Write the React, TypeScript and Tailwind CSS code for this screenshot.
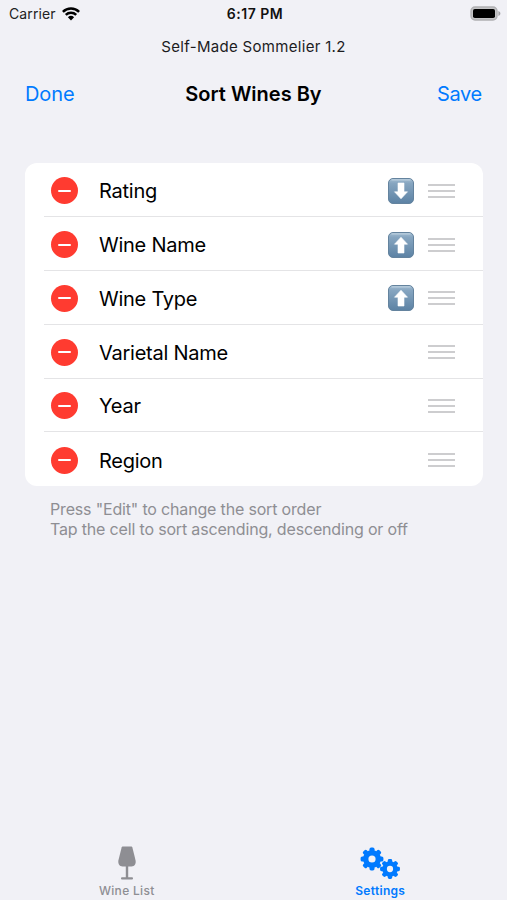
import React from 'react';

type SortDirection = 'asc' | 'desc' | null;

interface SortField {
  name: string;
  direction: SortDirection;
}

const fields: SortField[] = [
  { name: 'Rating', direction: 'desc' },
  { name: 'Wine Name', direction: 'asc' },
  { name: 'Wine Type', direction: 'asc' },
  { name: 'Varietal Name', direction: null },
  { name: 'Year', direction: null },
  { name: 'Region', direction: null },
];

const WifiIcon: React.FC = () => (
  <svg width="18" height="14" viewBox="0 0 18 14" fill="none" stroke="#000" strokeWidth="2.5">
    <path d="M0.9 4.9a11.6 11.6 0 0 1 16.2 0" />
    <path d="M3.8 7.9a7.4 7.4 0 0 1 10.4 0" />
    <path d="M9 13.6L5.9 10.3a4.5 4.5 0 0 1 6.2 0Z" fill="#000" stroke="none" />
  </svg>
);

const BatteryIcon: React.FC = () => (
  <svg width="31" height="15" viewBox="0 0 31 15">
    <rect x="1" y="1" width="26" height="13" rx="4" fill="#c4c4c6" stroke="#b0b0b3" strokeWidth="1.4" />
    <rect x="3" y="3" width="22" height="9" rx="1.8" fill="#000" />
    <path d="M28.4 4.9c1.2.5 2 1.4 2 2.5s-.8 2-2 2.5Z" fill="#a2a2a5" />
  </svg>
);

const ArrowBadge: React.FC<{ direction: 'asc' | 'desc' }> = ({ direction }) => (
  <svg width="26" height="26" viewBox="0 0 26 26">
    <defs>
      <linearGradient id={`badge-${direction}`} x1="0" y1="0" x2="0" y2="1">
        <stop offset="0" stopColor="#a3bdd2" />
        <stop offset="0.2" stopColor="#86a5c0" />
        <stop offset="1" stopColor="#5c82a4" />
      </linearGradient>
    </defs>
    <rect x="0.5" y="0.5" width="25" height="25" rx="4.5" fill={`url(#badge-${direction})`} stroke="#64839e" strokeWidth="1" />
    <path d="M4 1.9h18" stroke="#b9cddd" strokeWidth="1.2" strokeLinecap="round" />
    <path
      d="M13 5.2L19.5 12.2H16V21H10V12.2H6.5Z"
      fill="#fff"
      stroke="#fff"
      strokeWidth="0.6"
      strokeLinejoin="round"
      transform={direction === 'desc' ? 'rotate(180 13 13)' : undefined}
    />
  </svg>
);

const WineGlassIcon: React.FC = () => (
  <svg width="20" height="34" viewBox="0 0 20 34" fill="#8e8e93">
    <path d="M6 0.5H14C14.8 0.5 15.2 0.9 15.4 1.6L18.6 14.5C19.2 17.6 17.5 20.5 14.5 20.5H5.5C2.5 20.5 0.8 17.6 1.4 14.5L4.6 1.6C4.8 0.9 5.2 0.5 6 0.5Z" />
    <rect x="8.8" y="20" width="2.4" height="12" />
    <rect x="4" y="31.2" width="12" height="2.3" rx="1" />
  </svg>
);

const teeth = [0, 45, 90, 135, 180, 225, 270, 315];

const Gear: React.FC<{ cx: number; cy: number; scale: number }> = ({ cx, cy, scale }) => (
  <g transform={`translate(${cx} ${cy}) scale(${scale})`}>
    <circle r="6.3" fill="none" stroke="#007aff" strokeWidth="5.4" />
    {teeth.map((angle) => (
      <rect key={angle} x="-2.5" y="-11.4" width="5" height="4.5" rx="1.6" fill="#007aff" transform={`rotate(${angle})`} />
    ))}
  </g>
);

const GearsIcon: React.FC = () => (
  <svg width="40" height="34" viewBox="0 0 40 34">
    <Gear cx={12} cy={13} scale={1} />
    <Gear cx={30} cy={23} scale={0.87} />
  </svg>
);

const SortRow: React.FC<{ field: SortField; last: boolean }> = ({ field, last }) => (
  <li className="h-[53.8px] pl-[19px]">
    <div className={`flex h-full items-center pl-[7px] pr-7 pt-[2px] ${last ? '' : 'border-b border-[#e4e4e6]'}`}>
      <button className="flex size-[27px] shrink-0 items-center justify-center rounded-full bg-[#ff3b30]">
        <span className="h-[2px] w-[13px] rounded-full bg-white" />
      </button>
      <span className="ml-[21px] flex-1 pt-px text-[20px] tracking-[-0.25px] text-black">{field.name}</span>
      {field.direction && <ArrowBadge direction={field.direction} />}
      <div className="ml-[14px] flex w-[27px] flex-col gap-1">
        <span className="h-[2px] bg-[#cdcdcf]" />
        <span className="h-[2px] bg-[#cdcdcf]" />
        <span className="h-[2px] bg-[#cdcdcf]" />
      </div>
    </div>
  </li>
);

export default function App() {
  return (
    <div className="flex h-[900px] w-[507px] flex-col overflow-hidden bg-[#f1f1f6] font-['Inter','Liberation_Sans',sans-serif]">
      <header>
        <div className="grid h-[27px] grid-cols-3 items-center pl-[9px] pr-[6px]">
          <div className="flex items-center gap-[6px] text-[14px] tracking-[0.1px] text-[#222]">
            Carrier
            <WifiIcon />
          </div>
          <span className="text-center text-[14px] font-semibold tracking-[0.5px] text-[#111]">6:17 PM</span>
          <div className="flex justify-end"><BatteryIcon /></div>
        </div>
        <p className="mt-[9px] text-center text-[15px] leading-[22px] tracking-[0.31px] text-[#1c1c1e]">Self-Made Sommelier 1.2</p>
        <nav className="mt-[18px] grid h-9 grid-cols-3 items-center px-[25px] text-[20px]">
          <button className="text-left tracking-[-0.1px] text-[#007aff]">Done</button>
          <h1 className="text-center font-semibold text-black">Sort Wines By</h1>
          <button className="text-right tracking-[-0.3px] text-[#007aff]">Save</button>
        </nav>
      </header>

      <main className="flex-1 pl-[25px] pr-6 pt-[51.4px]">
        <ul className="overflow-hidden rounded-[12px] bg-white">
          {fields.map((field, i) => (
            <SortRow key={field.name} field={field} last={i === fields.length - 1} />
          ))}
        </ul>
        <p className="mt-[13px] whitespace-nowrap pl-[25px] text-[16px] leading-5 tracking-[-0.17px] text-[#8e8e93]">
          Press "Edit" to change the sort order
          <br />
          Tap the cell to sort ascending, descending or off
        </p>
      </main>

      <footer className="grid h-[54px] grid-cols-2">
        <button className="flex flex-col items-center text-[12px] font-medium tracking-[0.3px] text-[#8e8e93]">
          <WineGlassIcon />
          <span className="mt-[3px] leading-4">Wine List</span>
        </button>
        <button className="flex flex-col items-center text-[12px] font-semibold tracking-[0.3px] text-[#007aff]">
          <GearsIcon />
          <span className="mt-[3px] leading-4">Settings</span>
        </button>
      </footer>
    </div>
  );
}
